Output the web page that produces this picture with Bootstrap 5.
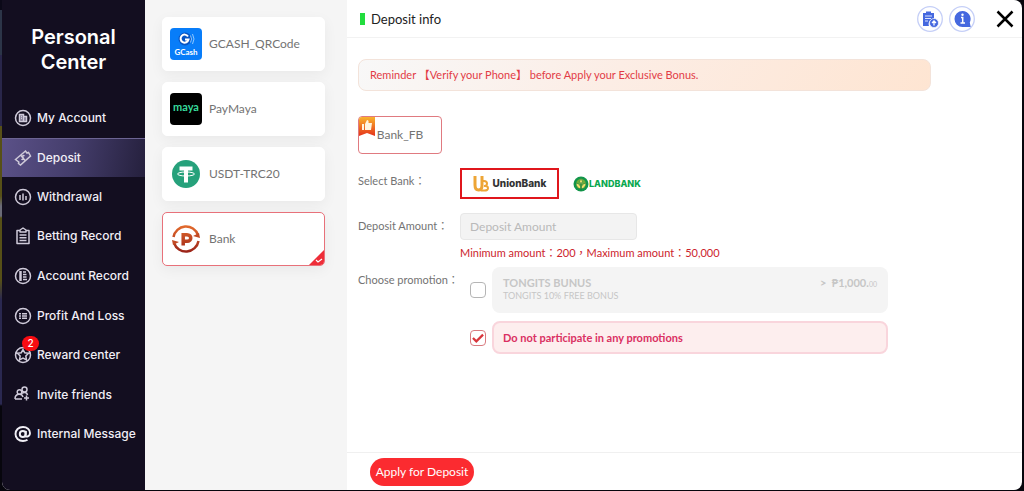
<!DOCTYPE html>
<html lang="en">
<head>
<meta charset="utf-8">
<meta name="viewport" content="width=device-width, initial-scale=1">
<title>Personal Center</title>
<link href="https://cdn.jsdelivr.net/npm/bootstrap@5.3.0/dist/css/bootstrap.min.css" rel="stylesheet">
<style>
  body { font-family: Lato, "Noto Sans CJK TC", sans-serif; font-size: 12px; line-height: 16px; color: #737373;
    background: #07060d linear-gradient(#0b0918 0 10px, #2c3548 10px 55px, #29264a 55px 126px, #575017 126px 196px, #6b6b78 206px 216px, #575017 218px 280px, #2a2850 300px 404px, #07060d 406px) no-repeat 0 0 / 4px 100%; }
  .window { min-height: calc(100vh - 1px); margin: 0 2px 1px; border-radius: 0 8px 8px 8px; overflow: hidden; background: #fff; }
  .side { width: 143px; background: #130e20; color: #f1eff6; font-family: Inter, sans-serif; }
  .side-title { font-size: 20px; line-height: 25px; font-weight: 600; color: #fff; padding: 25px 20px 23px; }
  .side-menu { display: grid; grid-auto-rows: 1fr; min-height: 356px; }
  .side-menu a { color: inherit; font-size: 12px; font-weight: 500; text-decoration: none; padding-left: 12px; gap: 5px; white-space: nowrap; }
  .side-menu a.active { background: linear-gradient(100deg, #5b5188, #443d6b 50%, #25203d); border-top: 1px solid #6c6493; }
  .side-menu svg { width: 18px; height: 18px; fill: none; stroke: #cfcad9; stroke-width: 1.5; overflow: visible; }
  .count { top: -10px; left: 8px; width: 17px; height: 15px; border-radius: 8px; background: #f80c12; font-size: 10px; line-height: 15px; }
  .methods { width: 202px; background: #f5f5f5; padding: 17px 22px 17px 17px; gap: 11px; }
  .method { height: 54px; border: 1px solid #fff; border-radius: 5px; background: #fff; color: #737373; padding: 0 7px; gap: 7px; box-shadow: 0 4px 14px #0000000d; }
  .method.chosen { border-color: #e8717a; }
  .method svg { width: 32px; height: 32px; }
  .method .corner { width: 15px; height: 15px; right: 0; bottom: 0; border-radius: 0 0 4px 0; }
  .head { height: 38px; border-bottom: 1px solid #f2f2f2; padding: 0 5px 0 13px; gap: 6px; }
  .head h2 { font-size: 13px; line-height: 18px; color: #222; }
  .bar { width: 5px; height: 12px; background: #22dd3e; }
  .head button { border: 0; background: none; padding: 0; }
  .head .info { margin-right: 12px; }
  .round-btn svg { width: 26px; height: 26px; }
  .content { padding: 21px 11px; }
  .notice { margin-right: 80px; height: 32px; padding: 0 11px; border: 1px solid #f3e3da; border-radius: 8px; color: #e23c46; font-size: 11px; background: linear-gradient(120deg, #f8f8f8, #fcede5 45%, #fee5d2); }
  .channel { width: 84px; height: 38px; margin-top: 25px; border: 1px solid #e07a80; border-radius: 4px; background: #fff; color: #737373; padding: 0; }
  .channel svg { left: 0; top: 0; width: 16px; height: 19px; }
  .field { display: grid; grid-template-columns: 102px 1fr; margin-top: 14px; font-size: 11px; }
  .field-name { padding-top: 5px; white-space: nowrap; }
  .promo-row { margin-top: 6px; }
  .bank { width: 99px; height: 31px; border: 2px solid transparent; background: #fff; padding: 0; font-family: Inter, sans-serif; font-weight: 800; font-size: 10px; line-height: 15px; }
  .bank svg { flex: none; }
  .bank.chosen { border-color: #e0161c; color: #333; }
  .banks { gap: 12px; }
  .land { width: auto; color: #0aa84f; font-size: 9px; }
  .amount { width: 177px; height: 27px; font-size: 12px; line-height: 16px; padding: 0 9px; border: 1px solid #e7e7e7; border-radius: 4px; background: #f3f3f3; }
  .amount::placeholder { color: #b9b9b9; }
  .limits { color: #cc242c; margin-top: 5px; }
  .promo { padding-left: 10px; gap: 6px; margin-right: 123px; }
  .promo input { width: 16px; height: 16px; margin: 0; border: 1px solid #b5b5b5; border-radius: 4px !important; flex: none; box-shadow: none; }
  .promo input:checked { background-color: #fff; border-color: #d97b80; background-size: 18px; background-image: url("data:image/svg+xml,%3Csvg xmlns='http://www.w3.org/2000/svg' viewBox='0 0 16 16'%3E%3Cpath d='M3.5 8l3 3 6-6' fill='none' stroke='%23d8363c' stroke-width='2'/%3E%3C/svg%3E"); }
  .offer { border-radius: 8px; padding: 0 11px; background: #f4f4f4; color: #c6c6c6; }
  .offer-off { height: 46px; padding-top: 9px; font-size: 9px; line-height: 12px; }
  .offer-off strong { font-size: 11px; line-height: 14px; }
  .offer-none { height: 33px; border: 2px solid #f9d5dc; padding: 0 9px; background: #fdeeee; color: #da3062; font-size: 11px; font-weight: 700; }
  .cents { font-size: 7px; }
  .foot { height: 38px; border-top: 1px solid #f0f0f0; padding: 5px 23px 0; }
  .apply { width: 104px; height: 28px; border: 0; border-radius: 14px; padding: 0; background: #fb2b30; color: #fff; font-size: 12px; line-height: 16px; }
</style>
</head>
<body>
<div class="window d-flex">
  <nav class="side flex-shrink-0" aria-label="Personal Center">
    <h1 class="side-title text-center mb-0">Personal Center</h1>
    <div class="side-menu">
      <a href="#" class="d-flex align-items-center"><svg viewBox="0 0 18 18"><circle cx="9" cy="9" r="7.500"/><path d="M5.500 12.500v-7h4v7zM9.500 7.500h3v5h-3M7 7.500h1M7 9.500h1" fill="#77718a"/></svg>My Account</a>
      <a href="#" class="d-flex align-items-center active"><svg viewBox="0 0 18 18"><path d="M1.500 10.500L11.500 2l1.500 2 1.500-.5 2 3.500-10 9-2-1.500.3-1.500zM7 6.500l4 5M10.500 7c-1.500-1-2.500 0-1.500 1.500s-.5 2.500-1.500 1.500"/></svg>Deposit</a>
      <a href="#" class="d-flex align-items-center"><svg viewBox="0 0 18 18"><circle cx="9" cy="9" r="7.500"/><path d="M6 7v5M9 5.500v7M12 8v4"/></svg>Withdrawal</a>
      <a href="#" class="d-flex align-items-center"><svg viewBox="0 0 18 18"><path d="M6 3.500H3v13h12v-13h-3M6 5V3l3-2 3 2v2zM5.500 8h7M5.500 10.800h7M5.500 13.500h7" stroke-linejoin="round"/></svg>Betting Record</a>
      <a href="#" class="d-flex align-items-center"><svg viewBox="0 0 18 18"><circle cx="9" cy="9" r="7.500"/><path d="M6.500 4v10" stroke-width="2.500"/><path d="M9 5h3M9 7.500h3.500M9 10h3.500M9 12.500h4"/></svg>Account Record</a>
      <a href="#" class="d-flex align-items-center"><svg viewBox="0 0 18 18"><circle cx="9" cy="9" r="7.500"/><path d="M5 6.800h2M8 6.800h5M5 9h2M8 9h5M5 11.200h2M8 11.200h5"/></svg>Profit And Loss</a>
      <a href="#" class="d-flex align-items-center"><span class="position-relative d-flex"><svg viewBox="0 0 18 18"><circle cx="9" cy="9" r="7.500"/><path d="M9 3.500l1.700 3.200 3.800.6-2.700 2.700.7 3.900L9 12.200l-3.500 1.700.7-3.900-2.700-2.700 3.800-.6zM14.500 7.300l2-.3M12.500 13.900l1 1.400M5.500 13.900l-1 1.400M3.500 7.300l-2-.3"/></svg><span class="count position-absolute text-center text-white">2</span></span>Reward center</a>
      <a href="#" class="d-flex align-items-center"><svg viewBox="0 0 18 18"><circle cx="10.500" cy="3.500" r="2.500"/><circle cx="5.500" cy="6" r="2.300"/><path d="M1 13c0-6 7-6 8-2M1 13h7M8 7.500c2-2 5-1 5.500 1.500M10 12h5M12.500 9.500v5"/></svg>Invite friends</a>
      <a href="#" class="d-flex align-items-center"><svg viewBox="0 0 18 18"><g stroke="#f1eff6"><circle cx="8.800" cy="9" r="3" stroke-width="2"/><path d="M12 5.800l-.7 4.700c-.2 2 4.700 1.500 4.700-2.500 0-3.500-3-6-7-6-4.500 0-7.500 3-7.500 7s3 7 7.500 7c2 0 3.500-.5 4.500-1.200" stroke-width="1.900"/></g></svg>Internal Message</a>
    </div>
  </nav>

  <aside class="methods flex-shrink-0 d-flex flex-column">
    <button type="button" class="method d-flex align-items-center"><svg viewBox="0 0 32 32"><rect width="32" height="32" rx="4" fill="#087df9"/><circle cx="15" cy="11" r="6.500" fill="#0754c4"/><path d="M18 8.500a4 4 0 1 0 .5 3H15" fill="none" stroke="#fff" stroke-width="2"/><path d="M20.500 7.500q2 3.500 0 7M22.500 6q3 5 0 10" fill="none" stroke="#8fc8ff"/><text x="16" y="27" text-anchor="middle" font-family="Lato" font-weight="700" font-size="8" fill="#fff">GCash</text></svg>GCASH_QRCode</button>
    <button type="button" class="method d-flex align-items-center"><svg viewBox="0 0 32 32"><rect width="32" height="32" rx="4"/><text x="16" y="18" text-anchor="middle" font-family="Lato" font-weight="700" font-size="11" fill="#37d99a">maya</text></svg>PayMaya</button>
    <button type="button" class="method d-flex align-items-center"><svg viewBox="0 0 32 32"><circle cx="16" cy="16" r="14" fill="#26a17b"/><path d="M9.500 8.500h13v4H18v12h-4v-12H9.500z" fill="#fff"/><ellipse cx="16" cy="16" rx="8.500" ry="2" fill="none" stroke="#fff"/></svg>USDT-TRC20</button>
    <button type="button" class="method chosen d-flex align-items-center position-relative"><svg viewBox="0 0 32 32"><defs><linearGradient id="rust" gradientUnits="userSpaceOnUse" x1="0" y1="3" x2="0" y2="29"><stop stop-color="#e26a2c"/><stop offset="1" stop-color="#9b2318"/></linearGradient></defs><g fill="none" stroke="url(#rust)" stroke-width="2.500"><path d="M3.500 14A12.700 12.700 0 0 1 28 12M28.500 18A12.700 12.700 0 0 1 4 20"/></g><path d="M30 15l-7-2 6-3zM2 17l7 2-6 3z" fill="#c24a24"/><path d="M13.200 22.500V11.700H17c5 0 5 6.500 0 6.500h-4" fill="none" stroke="url(#rust)" stroke-width="3.500"/></svg>Bank<svg class="corner position-absolute" viewBox="0 0 15 15"><path d="M15 0v15H0z" fill="#ee2d38"/><path d="M7 10l2 2 4-3" fill="none" stroke="#fff" stroke-width="1.200"/></svg></button>
  </aside>

  <main class="flex-grow-1 d-flex flex-column">
    <header class="head d-flex align-items-center">
      <span class="bar"></span>
      <h2 class="fw-normal mb-0 me-auto">Deposit info</h2>
      <button type="button" class="round-btn d-flex" aria-label="Deposit records"><svg viewBox="0 0 26 26"><circle cx="13" cy="13" r="12.300" fill="#fff" stroke="#c5cff7" stroke-width="1.300"/><path d="M6 7h3V5.500h5V7h3v6a5 5 0 0 0-5 7H6z" fill="#4568df"/><path d="M8 10h7M8 12.500h6M8 15h3" stroke="#dbe3ff"/><circle cx="17" cy="17" r="4.500" fill="#4568df" stroke="#fff" stroke-width=".7"/><path d="M17 19.500v-4M15 17l2-2 2 2" fill="none" stroke="#fff" stroke-width="1.300"/></svg></button>
      <button type="button" class="round-btn info d-flex" aria-label="Information"><svg viewBox="0 0 26 26"><circle cx="13" cy="13" r="12.300" fill="#fff" stroke="#c5cff7" stroke-width="1.300"/><path d="M13.500 5a8 8 0 0 1 7.300 11.500l.9 4.500H13.500a8 8 0 0 1 0-16z" fill="#4568df"/><path d="M12 11.500h1.700v5M11.500 17h4.500" fill="none" stroke="#fff" stroke-width="1.500"/><circle cx="13.500" cy="8.800" r="1.200" fill="#fff"/></svg></button>
      <button type="button" class="d-flex" aria-label="Close"><svg width="24" height="24" viewBox="0 0 24 24"><path d="M4.500 4.500l15 15M19.500 4.500l-15 15" stroke="#000" stroke-width="2.500"/></svg></button>
    </header>

    <div class="content flex-grow-1">
      <div class="notice d-flex align-items-center">Reminder 【Verify your Phone】 before Apply your Exclusive Bonus.</div>
      <button type="button" class="channel d-block position-relative"><svg class="position-absolute" viewBox="0 0 16 19"><defs><linearGradient id="flame" x2="0" y2="1"><stop stop-color="#f9b32c"/><stop offset="1" stop-color="#e5331b"/></linearGradient></defs><path d="M3 0h13v19l-8-3-8 3V3q0-3 3-3z" fill="url(#flame)"/><path d="M3 7h2v6H3zM6 7l2-4q2 0 1.500 3H13l-1 7H6z" fill="#fff5df"/></svg>Bank_FB</button>

      <div class="field">
        <span id="bank-label" class="field-name">Select Bank：</span>
        <div class="banks d-flex" role="group" aria-labelledby="bank-label">
          <button type="button" class="bank chosen d-flex align-items-center justify-content-center gap-1"><svg width="16" height="17" viewBox="0 0 16 17" fill="none" stroke="#eda536"><path d="M2 1v9q0 5 3.500 5T9 11V1" stroke-width="3"/><path d="M9 6h2q3 0 3 2.500T11 11h1q3 0 3 2.300T11 15.500H8" stroke-width="2"/></svg>UnionBank</button>
          <button type="button" class="bank land d-flex align-items-center"><svg width="16" height="16" viewBox="0 0 16 16"><circle cx="8" cy="8" r="7.500" fill="#12964a"/><circle cx="8" cy="8" r="5" fill="#6fae38"/><path d="M8 15V6M8 13Q3 12 3 7q5 1 5 6 0-5 5-6 0 5-5 6M8 9Q5 6 8 2q3 4 0 7" fill="#f2de6a" stroke="#117c3c" stroke-width=".6"/></svg>LANDBANK</button>
        </div>
      </div>

      <div class="field">
        <label for="amount" class="field-name">Deposit Amount：</label>
        <div>
          <input id="amount" class="form-control amount" type="text" placeholder="Deposit Amount">
          <div class="limits">Minimum amount：200，Maximum amount：50,000</div>
        </div>
      </div>

      <div class="field promo-row">
        <span id="promo-label" class="field-name">Choose promotion：</span>
        <div class="d-flex flex-column gap-2" role="group" aria-labelledby="promo-label">
          <div class="promo d-flex align-items-center">
            <input class="form-check-input" type="checkbox" id="bonus">
            <label for="bonus" class="offer offer-off flex-grow-1 d-flex justify-content-between"><span><strong class="d-block">TONGITS BUNUS</strong>TONGITS 10% FREE BONUS</span><span><strong>&gt;&nbsp; ₱1,000.</strong><span class="cents">00</span></span></label>
          </div>
          <div class="promo d-flex align-items-center">
            <input class="form-check-input" type="checkbox" id="none" checked>
            <label for="none" class="offer offer-none flex-grow-1 d-flex align-items-center">Do not participate in any promotions</label>
          </div>
        </div>
      </div>
    </div>

    <footer class="foot"><button type="button" class="apply">Apply for Deposit</button></footer>
  </main>
</div>
<script src="https://cdn.jsdelivr.net/npm/bootstrap@5.3.0/dist/js/bootstrap.bundle.min.js"></script>
</body>
</html>
